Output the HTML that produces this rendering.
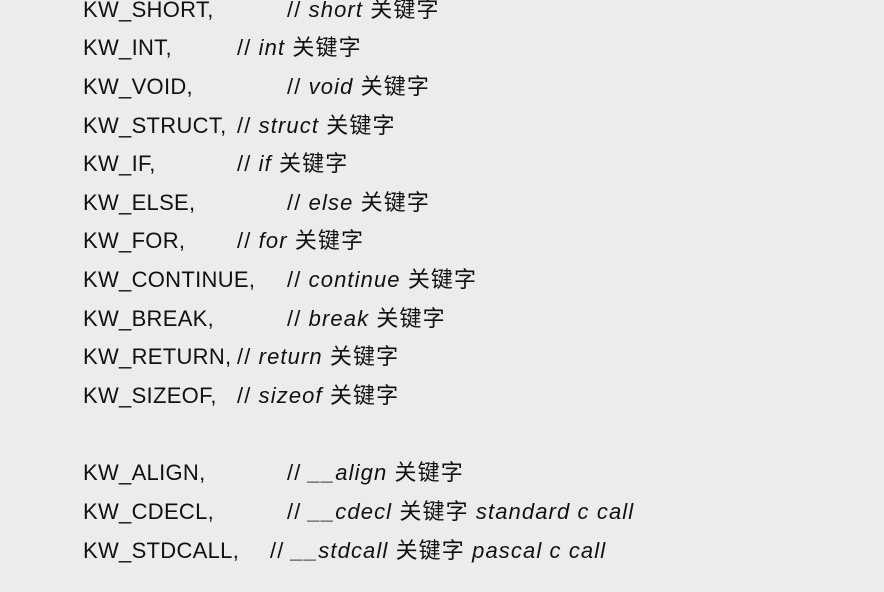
<html><head><style>
body{margin:0;width:884px;height:592px;background:#ececec;overflow:hidden;position:relative;font-family:"Liberation Sans","Noto Sans CJK SC",sans-serif;font-size:22px;color:#111}
div{position:absolute;white-space:pre;line-height:24px}
.k{left:83px;letter-spacing:0.3px}
div:not(.k){letter-spacing:1.1px}
</style></head><body>
<div class="k" style="top:-2px">KW_SHORT,</div><div style="left:287px;top:-2px">// <i>short</i> 关键字</div>
<div class="k" style="top:36px">KW_INT,</div><div style="left:237px;top:36px">// <i>int</i> 关键字</div>
<div class="k" style="top:75px">KW_VOID,</div><div style="left:287px;top:75px">// <i>void</i> 关键字</div>
<div class="k" style="top:114px">KW_STRUCT,</div><div style="left:237px;top:114px">// <i>struct</i> 关键字</div>
<div class="k" style="top:152px">KW_IF,</div><div style="left:237px;top:152px">// <i>if</i> 关键字</div>
<div class="k" style="top:191px">KW_ELSE,</div><div style="left:287px;top:191px">// <i>else</i> 关键字</div>
<div class="k" style="top:229px">KW_FOR,</div><div style="left:237px;top:229px">// <i>for</i> 关键字</div>
<div class="k" style="top:268px">KW_CONTINUE,</div><div style="left:287px;top:268px">// <i>continue</i> 关键字</div>
<div class="k" style="top:307px">KW_BREAK,</div><div style="left:287px;top:307px">// <i>break</i> 关键字</div>
<div class="k" style="top:345px">KW_RETURN,</div><div style="left:237px;top:345px">// <i>return</i> 关键字</div>
<div class="k" style="top:384px">KW_SIZEOF,</div><div style="left:237px;top:384px">// <i>sizeof</i> 关键字</div>
<div class="k" style="top:461px">KW_ALIGN,</div><div style="left:287px;top:461px">// <i>__align</i> 关键字</div>
<div class="k" style="top:500px">KW_CDECL,</div><div style="left:287px;top:500px">// <i>__cdecl</i> 关键字 <i>standard c call</i></div>
<div class="k" style="top:539px">KW_STDCALL,</div><div style="left:270px;top:539px">// <i>__stdcall</i> 关键字 <i>pascal c call</i></div>
</body></html>
